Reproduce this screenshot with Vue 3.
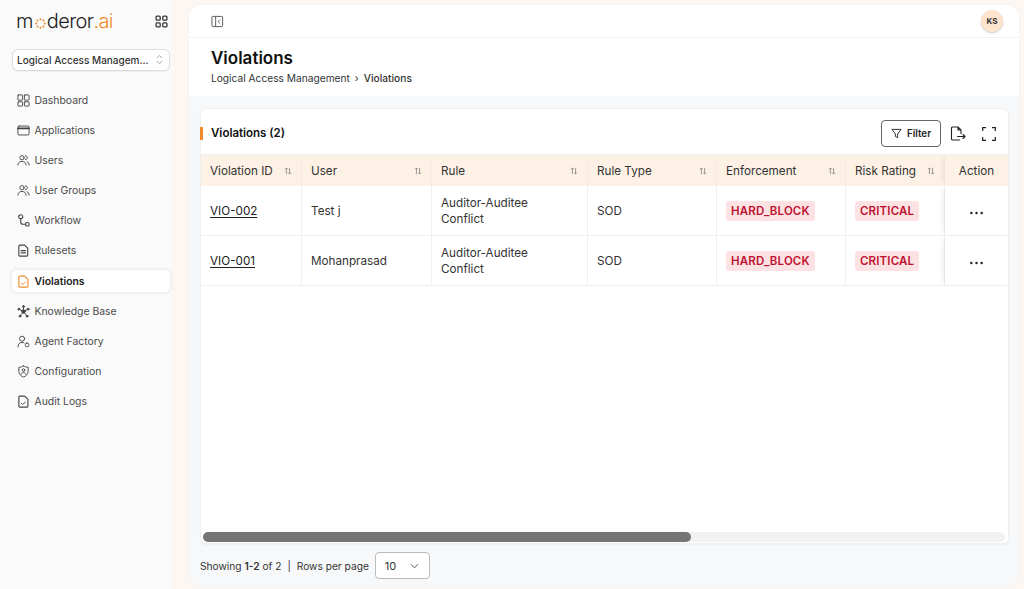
<script setup>
const nav = [
  { label: 'Dashboard', icon: 'dash' },
  { label: 'Applications', icon: 'app' },
  { label: 'Users', icon: 'users' },
  { label: 'User Groups', icon: 'users' },
  { label: 'Workflow', icon: 'flow' },
  { label: 'Rulesets', icon: 'rules' },
  { label: 'Violations', icon: 'viol', active: true },
  { label: 'Knowledge Base', icon: 'kb' },
  { label: 'Agent Factory', icon: 'agent' },
  { label: 'Configuration', icon: 'conf' },
  { label: 'Audit Logs', icon: 'audit' }
]
const cols = [
  { t: 'Violation ID', w: 101 },
  { t: 'User', w: 130 },
  { t: 'Rule', w: 156 },
  { t: 'Rule Type', w: 129 },
  { t: 'Enforcement', w: 129 },
  { t: 'Risk Rating', w: 99 }
]
const rows = [
  { id: 'VIO-002', user: 'Test j' },
  { id: 'VIO-001', user: 'Mohanprasad' }
]
const thumb = 488
</script>

<template>
  <div class="app">
    <aside class="side">
      <div class="brand">
        <div class="logo">
          <span>m</span>
          <svg class="logo-dot" viewBox="0 0 14 14" width="11" height="11">
            <g fill="#ee8a2d">
              <circle cx="7" cy="1.6" r="1.3" /><circle cx="10.8" cy="3.2" r="1.3" /><circle cx="12.4" cy="7" r="1.3" /><circle cx="10.8" cy="10.8" r="1.3" />
              <circle cx="7" cy="12.4" r="1.3" /><circle cx="3.2" cy="10.8" r="1.3" /><circle cx="1.6" cy="7" r="1.3" /><circle cx="3.2" cy="3.2" r="1.3" />
            </g>
          </svg>
          <span>deror</span><span class="ai">.ai</span>
        </div>
        <svg class="grid-ic" viewBox="0 0 14 14" width="13" height="13" fill="none" stroke="#333" stroke-width="1.4">
          <rect x="1.2" y="1.2" width="4.4" height="4.4" rx="1" /><rect x="8.4" y="1.2" width="4.4" height="4.4" rx="1" />
          <rect x="1.2" y="8.4" width="4.4" height="4.4" rx="1" /><rect x="8.4" y="8.4" width="4.4" height="4.4" rx="1" />
        </svg>
      </div>
      <div class="select">
        <span>Logical Access Managem...</span>
        <svg viewBox="0 0 8 12" width="7" height="11" fill="none" stroke="#999" stroke-width="1"><path d="M1 4.2 4 1.4l3 2.8M1 7.8l3 2.8 3-2.8" /></svg>
      </div>
      <nav class="nav">
        <div v-for="n in nav" :key="n.label" class="item" :class="{ active: n.active }">
          <svg viewBox="0 0 14 14" width="13" height="13" fill="none" stroke="currentColor" stroke-width="1" stroke-linecap="round" stroke-linejoin="round">
            <template v-if="n.icon === 'dash'">
              <rect x="1" y="1" width="5" height="5.6" rx=".5" /><rect x="8" y="1" width="5" height="5.6" rx=".5" />
              <rect x="1" y="8.4" width="5" height="4.6" rx=".5" /><rect x="8" y="8.4" width="5" height="4.6" rx=".5" />
            </template>
            <template v-else-if="n.icon === 'app'">
              <rect x="1" y="2.2" width="12" height="9.6" rx="1.2" /><path d="M1 4.800h12" stroke-width="1.800" />
            </template>
            <template v-else-if="n.icon === 'users'">
              <circle cx="5.4" cy="4" r="2.3" /><path d="M1 12c0-2.6 1.8-4 4.4-4s4.4 1.4 4.400 4M9 1.900c1.300.2 2.100 1 2.100 2.100S10.300 5.900 9 6.100M10.900 8.300c1.300.5 2.100 1.800 2.100 3.700" />
            </template>
            <template v-else-if="n.icon === 'flow'">
              <circle cx="4" cy="3" r="2.200" stroke-width="1.200" /><rect x="9.300" y="9.200" width="3.700" height="3.700" rx="1.400" stroke-width="1.200" /><path d="M4 5.200v3.300c0 1.800 1.200 2.500 2.500 2.500h2.800" stroke-width="1.200" />
            </template>
            <template v-else-if="n.icon === 'rules'">
              <path d="M3 1.200h5.200L11.500 4.500V12a1 1 0 0 1-1 1H3a1 1 0 0 1-1-1V2.200a1 1 0 0 1 1-1Z" stroke-width="1.200" /><path d="M4.500 7.200h4.500M4.500 9.500h4.500" stroke-width="1.400" />
            </template>
            <template v-else-if="n.icon === 'viol'">
              <path d="M3 1.200h5.200L11.800 4.800V12a1 1 0 0 1-1 1H3a1 1 0 0 1-1-1V2.200a1 1 0 0 1 1-1Z" stroke-width="1.200" /><path d="m4.700 8.800 1.500 1.500 2.800-2.800" />
            </template>
            <template v-else-if="n.icon === 'kb'">
              <circle cx="7" cy="7" r="1.900" fill="currentColor" /><circle cx="2" cy="4.500" r="1" fill="currentColor" /><circle cx="12" cy="4.500" r="1" fill="currentColor" /><circle cx="7" cy="1.600" r="1" fill="currentColor" /><circle cx="3.200" cy="12" r="1" fill="currentColor" /><circle cx="10.800" cy="12" r="1" fill="currentColor" />
              <path d="M2 4.500 7 7l5-2.500M7 1.600V7M3.200 12 7 7l3.800 5" />
            </template>
            <template v-else-if="n.icon === 'agent'">
              <circle cx="5.500" cy="4" r="2.700" /><path d="M1 12.800c0-3 1.800-4.800 4.500-4.800 .8 0 1.500.2 2.100.5" /><rect x="9" y="8.800" width="3.800" height="3.800" rx="1.500" />
            </template>
            <template v-else-if="n.icon === 'conf'">
              <path d="M7 1c1.600 1 3.300 1.400 5 1.500v4.300c0 3-2 5-5 6.200-3-1.200-5-3.200-5-6.200V2.500C3.700 2.400 5.400 2 7 1Z" /><circle cx="7" cy="5.500" r="1.400" /><path d="M4.600 9.800c.4-1.300 1.300-1.800 2.400-1.800s2 .5 2.400 1.800" />
            </template>
            <template v-else>
              <path d="M3 1.200h5.200L11.800 4.800V12a1 1 0 0 1-1 1H3a1 1 0 0 1-1-1V2.200a1 1 0 0 1 1-1Z" stroke-width="1.200" /><path d="m4.700 8.800 1.500 1.500 2.800-2.800" />
            </template>
          </svg>
          <span>{{ n.label }}</span>
        </div>
      </nav>
    </aside>

    <main class="main">
      <div class="topbar">
        <svg viewBox="0 0 14 14" width="13" height="13" fill="none" stroke="#555" stroke-width="1">
          <rect x="1" y="1.500" width="11.500" height="11" rx=".8" /><path d="M5 1.500v11M9.600 5 7.600 7l2 2" />
        </svg>
        <div class="avatar">KS</div>
      </div>
      <div class="head">
        <h1>Violations</h1>
        <div class="crumbs"><span>Logical Access Management</span><span class="sep">›</span><b>Violations</b></div>
      </div>
      <div class="content">
        <section class="card">
          <div class="card-head">
            <div class="card-title">Violations (2)</div>
            <div class="tools">
              <button class="filter">
                <svg viewBox="0 0 12 12" width="11" height="11" fill="none" stroke="#222" stroke-width="1" stroke-linejoin="round"><path d="M1 1.500h10L7.200 6.500v4L4.800 9.300V6.500Z" /></svg>
                Filter
              </button>
              <svg class="export" viewBox="0 0 16 16" width="16" height="16" fill="none" stroke="#222" stroke-width="1.100" stroke-linecap="round" stroke-linejoin="round">
                <path d="M9.500 14H2.500a1 1 0 0 1-1-1V2a1 1 0 0 1 1-1h5.500l3 3v3.500M8 1v3h3M7.500 10.500H15M13 8.500l2 2-2 2" />
              </svg>
              <svg class="expand" viewBox="0 0 14 14" width="14" height="14" fill="none" stroke="#222" stroke-width="1.200">
                <path d="M.7 4V.7H4M10 .7h3.300V4M13.300 10v3.300H10M4 13.300H.7V10" />
              </svg>
            </div>
          </div>
          <div class="scroll">
            <table>
              <colgroup>
                <col v-for="c in cols" :key="c.t" :style="{ width: c.w + 'px' }" />
                <col class="actionc" />
              </colgroup>
              <thead>
                <tr>
                  <th v-for="c in cols" :key="c.t">
                    <div class="th">
                      <span>{{ c.t }}</span>
                      <svg viewBox="0 0 10 10" width="8" height="8" fill="none" stroke="#777" stroke-width=".9"><path d="M3 9V1.200M1.300 2.900 3 1.200l1.700 1.700M7 1v7.800M5.300 7.100 7 8.800l1.700-1.700" /></svg>
                    </div>
                  </th>
                  <th class="sticky center">Action</th>
                </tr>
              </thead>
              <tbody>
                <tr v-for="r in rows" :key="r.id">
                  <td><a class="vid">{{ r.id }}</a></td>
                  <td>{{ r.user }}</td>
                  <td>Auditor-Auditee<br />Conflict</td>
                  <td>SOD</td>
                  <td><span class="tag">HARD_BLOCK</span></td>
                  <td><span class="tag">CRITICAL</span></td>
                  <td class="sticky center">
                    <svg viewBox="0 0 16 4" width="15" height="4" fill="#222"><circle cx="2.500" cy="2" r="1.300" /><circle cx="8" cy="2" r="1.300" /><circle cx="13.500" cy="2" r="1.300" /></svg>
                  </td>
                </tr>
              </tbody>
            </table>
          </div>
          <div class="track"><div class="thumb" :style="{ width: thumb + 'px' }"></div></div>
        </section>
        <footer class="pager">
          <span>Showing <b>1-2</b> of 2</span><span class="bar">|</span><span>Rows per page</span>
          <div class="rows">
            <span>10</span>
            <svg viewBox="0 0 10 6" width="9" height="6" fill="none" stroke="#444" stroke-width="1"><path d="m1 1 4 4 4-4" /></svg>
          </div>
        </footer>
      </div>
    </main>
  </div>
</template>

<style>
html, body { margin: 0; background: #fcf7f3; }
</style>

<style scoped>
* { box-sizing: border-box; }
.app {
  display: flex;
  width: 1024px;
  height: 589px;
  overflow: hidden;
  background: #fcf7f3;
  font-family: Inter, "Liberation Sans", sans-serif;
  color: #333;
}
.side {
  width: 172px;
  flex: none;
  background: #fafafa;
  padding: 0 2px 0 12px;
}
.brand {
  height: 49px;
  display: flex;
  align-items: center;
  justify-content: space-between;
  padding: 0 2px 7px 4px;
}
.logo {
  display: flex;
  align-items: center;
  font-size: 20px;
  font-weight: 300;
  letter-spacing: -.6px;
  color: #222;
  line-height: 24px;
}
.logo-dot { margin: 4px 1px 0 2px; }
.ai { color: #ee8a2d; }
.select {
  height: 22px;
  width: 158px;
  display: flex;
  align-items: center;
  justify-content: space-between;
  padding: 0 6px 1px 4px;
  background: #fff;
  border: 1px solid #dcdcdc;
  border-radius: 6px;
  font-size: 10px;
  font-weight: 500;
  color: #333;
  box-shadow: 0 1px 2px #0000000d;
  white-space: nowrap;
}
.nav { margin-top: 18.500px; display: flex; flex-direction: column; gap: 8.100px; width: 158px; }
.item {
  height: 22px;
  display: flex;
  align-items: center;
  gap: 5px;
  padding-left: 4.500px;
  font-size: 10.400px;
  color: #4a4a4a;
  border-radius: 5px;
}
.item svg { flex: none; color: #444; }
.item.active {
  background: #fff;
  font-weight: 600;
  color: #222;
  box-shadow: 0 0 4px #0000001f;
}
.item.active svg { color: #ee8a2d; }
.main {
  width: 830px;
  margin: 5px 5px 3px 17px;
  background: #f7f8fa;
  border-radius: 12px;
  overflow: hidden;
  display: flex;
  flex-direction: column;
  box-shadow: 0 0 3px #0000000a;
}
.topbar {
  height: 33px;
  flex: none;
  background: #fff;
  border-bottom: 1px solid #f1f1f1;
  display: flex;
  align-items: center;
  justify-content: space-between;
  padding: 0 16px 0 22px;
}
.avatar {
  width: 22px;
  height: 22px;
  border-radius: 50%;
  background: #fde4cc;
  box-shadow: 0 1px 2px #00000033;
  display: flex;
  align-items: center;
  justify-content: center;
  font-size: 8px;
  font-weight: 700;
  color: #333;
}
.head {
  height: 58px;
  flex: none;
  background: #fff;
  padding: 10px 22px 0;
}
h1 {
  margin: 0;
  font-size: 17px;
  font-weight: 600;
  line-height: 20px;
  color: #111;
}
.crumbs {
  margin-top: 3px;
  font-size: 10.200px;
  line-height: 14px;
  color: #333;
  display: flex;
  align-items: center;
}
.crumbs .sep { margin: 0 5px; }
.crumbs b { font-weight: 500; }
.content {
  flex: 1;
  min-height: 0;
  display: flex;
  flex-direction: column;
  padding: 12px 10px 0 11px;
}
.card {
  width: 809px;
  height: 436px;
  flex: none;
  background: #fff;
  border: 1px solid #efefef;
  border-radius: 6px;
  box-shadow: 0 1px 2px #0000000d;
  display: flex;
  flex-direction: column;
}
.card-head {
  height: 46px;
  flex: none;
  display: flex;
  align-items: center;
  justify-content: space-between;
  padding: 4px 12px 0 0;
  border-bottom: 1px solid #f1f1f1;
}
.card-title {
  border-left: 3px solid #ee8a2d;
  margin-left: -1px;
  padding-left: 8px;
  height: 13px;
  line-height: 13px;
  font-size: 11.500px;
  font-weight: 600;
  color: #111;
}
.tools { display: flex; align-items: center; }
.filter {
  width: 60px;
  height: 27px;
  display: flex;
  align-items: center;
  justify-content: center;
  gap: 5px;
  background: #fff;
  border: 1px solid #666;
  border-radius: 4px;
  font: 600 9.800px Inter, "Liberation Sans", sans-serif;
  color: #222;
  padding: 0;
}
.export { margin-left: 9px; }
.expand { margin-left: 16px; }
.scroll {
  flex: 1;
  min-height: 0;
  overflow: hidden;
}
.track {
  height: 10px;
  flex: none;
  margin: 0 3px 1px 2px;
  background: #f1f1f1;
  border-radius: 5px;
}
.thumb {
  height: 10px;
  background: #757575;
  border-radius: 5px;
}
table {
  width: 807px;
  table-layout: fixed;
  border-collapse: separate;
  border-spacing: 0;
  font-size: 11.700px;
  color: #333;
}
.actionc { width: 63px; }
th {
  height: 31px;
  background: #fdf1e6;
  font-weight: 400;
  text-align: left;
  padding: 0 9px;
  border-right: 1px solid #f7ece2;
  white-space: nowrap;
}
.th { display: flex; align-items: center; justify-content: space-between; }
td {
  height: 50px;
  padding: 1px 9px 0;
  line-height: 16px;
  border-right: 1px solid #efefef;
  border-bottom: 1px solid #efefef;
  background: #fff;
}
.sticky {
  position: sticky;
  right: 0;
  box-shadow: -6px 0 6px -4px #00000014;
  border-right: 0;
}
.center { text-align: center; padding: 0; }
.vid { text-decoration: underline; text-underline-offset: 2px; color: #222; }
.tag {
  display: inline-block;
  height: 20px;
  padding: 0 5px;
  line-height: 20px;
  border-radius: 3px;
  background: #fde2e4;
  color: #bd1230;
  font-size: 11.500px;
  font-weight: 600;
  letter-spacing: .15px;
}
.pager {
  flex: 1;
  display: flex;
  align-items: center;
  font-size: 10.200px;
  color: #333;
  padding: 1px 0 0 0;
}
.pager b { font-weight: 600; }
.bar { margin: 0 6px; }
.rows {
  width: 55px;
  height: 27px;
  margin-left: 6px;
  display: flex;
  align-items: center;
  justify-content: space-between;
  padding: 0 10px 0 9px;
  background: #fff;
  border: 1px solid #bbb;
  border-radius: 4px;
  font-size: 11px;
}
</style>
